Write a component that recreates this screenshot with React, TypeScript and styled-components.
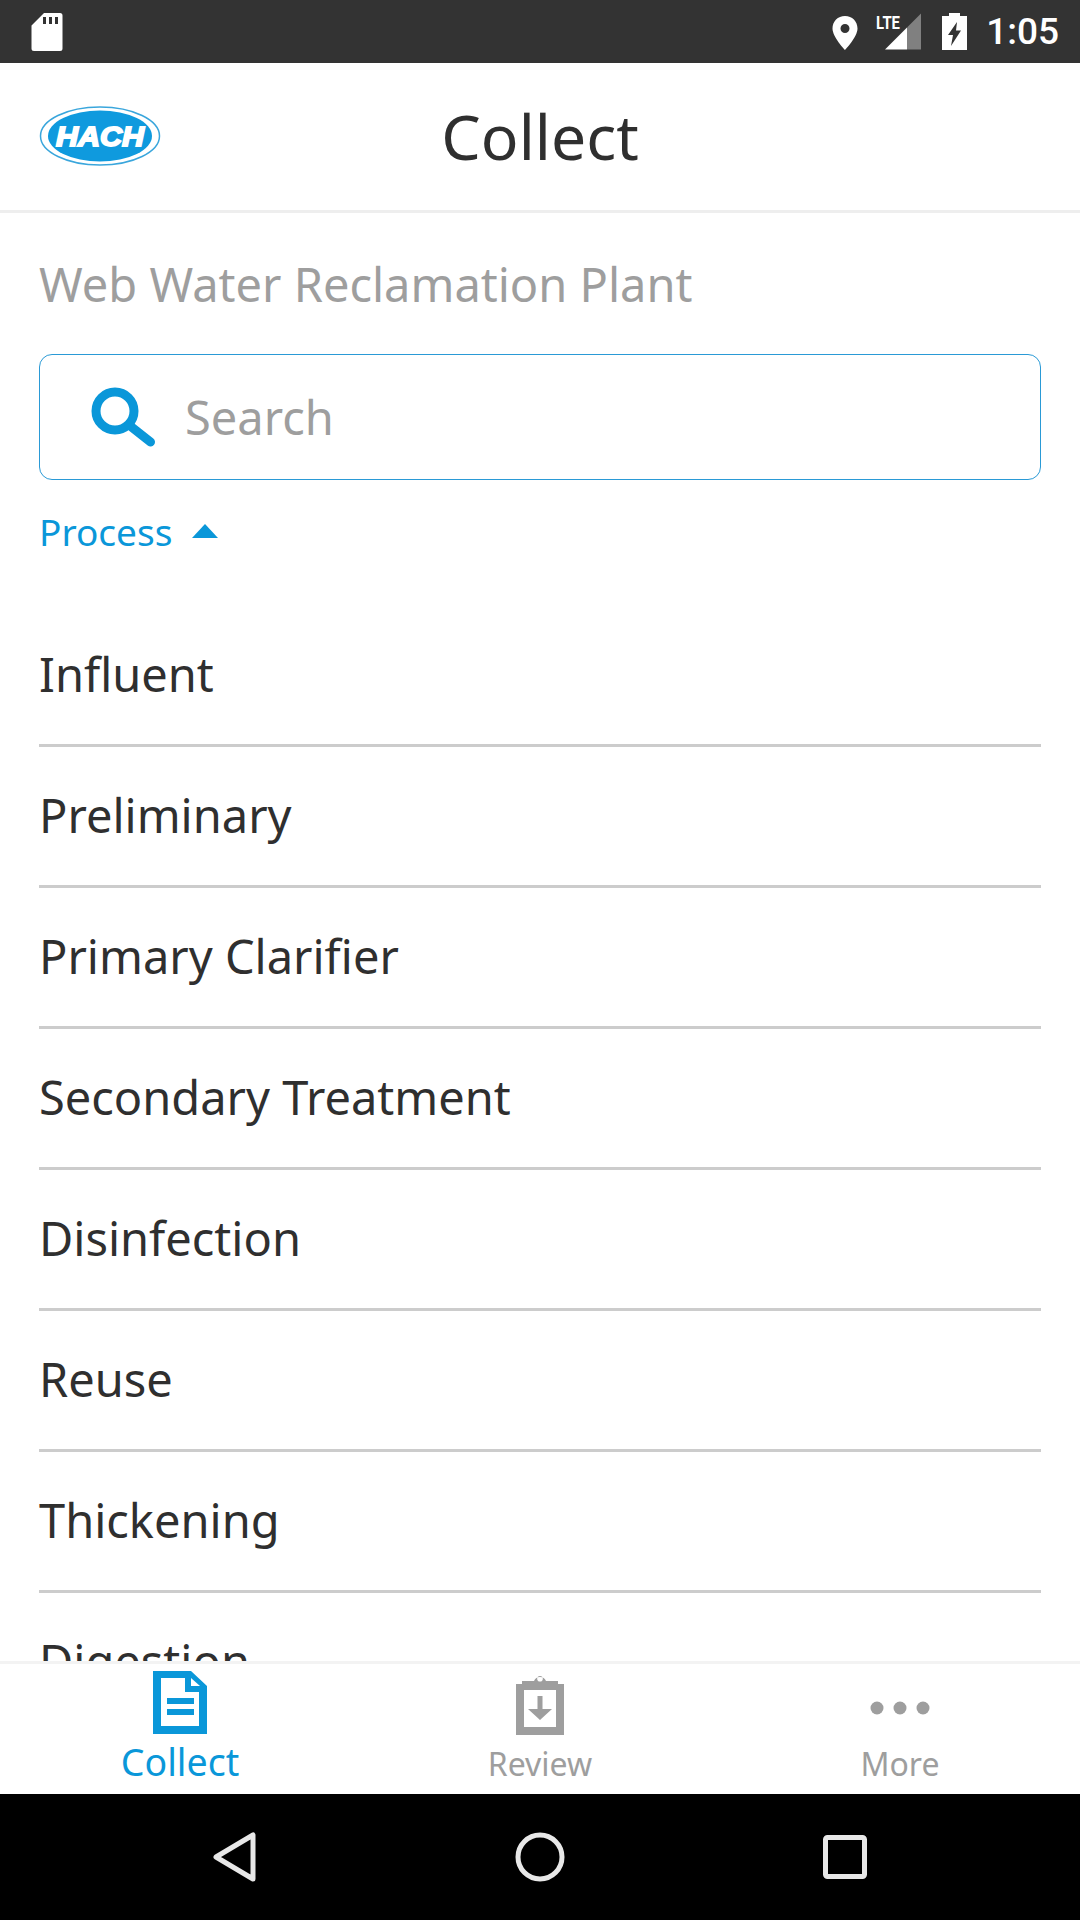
import React from "react";
import styled, { createGlobalStyle } from "styled-components";

const BLUE = "#0a97d9";
const GRAY = "#9e9e9e";
const INK = "#2f2f2f";

const GlobalStyle = createGlobalStyle`
  html, body {
    margin: 0;
    padding: 0;
    background: #fff;
  }
  * {
    box-sizing: border-box;
  }
`;

const Screen = styled.div`
  display: flex;
  flex-direction: column;
  width: 1080px;
  height: 1920px;
  overflow: hidden;
  font-family: "Noto Sans", "Open Sans", sans-serif;
  background: #fff;
`;

const StatusBar = styled.div`
  display: flex;
  align-items: center;
  justify-content: space-between;
  flex: 0 0 63px;
  padding: 0 21px 0 31px;
  background: #333333;
`;

const StatusIcons = styled.div`
  display: flex;
  align-items: center;
`;

const Clock = styled.span`
  margin-left: 19px;
  font-family: "Roboto", sans-serif;
  font-size: 37px;
  font-weight: 500;
  line-height: 63px;
  color: #fff;
`;

const Header = styled.header`
  position: relative;
  display: flex;
  align-items: center;
  justify-content: center;
  flex: 0 0 150px;
  border-bottom: 3px solid #eeeeee;
`;

const LogoSlot = styled.div`
  position: absolute;
  left: 39px;
  top: 43px;
  display: flex;
`;

const Title = styled.h1`
  margin: 0 0 2px;
  font-size: 62.5px;
  font-weight: 400;
  color: ${INK};
`;

const Content = styled.main`
  flex: 1 1 0;
  min-height: 0;
  overflow: hidden;
  padding: 0 39px;
`;

const PlantName = styled.div`
  margin-top: 37px;
  font-size: 47px;
  line-height: 68px;
  color: ${GRAY};
`;

const SearchBox = styled.div`
  display: flex;
  align-items: center;
  gap: 28px;
  height: 126px;
  margin-top: 36px;
  padding-left: 51px;
  border: 1.5px solid #2a9ad6;
  border-radius: 13px;
`;

const SearchHint = styled.span`
  font-size: 47px;
  color: ${GRAY};
`;

const Filter = styled.div`
  display: flex;
  align-items: center;
  gap: 20px;
  height: 48px;
  margin-top: 27px;
  font-size: 37px;
  color: ${BLUE};
`;

const Caret = styled.span`
  width: 0;
  height: 0;
  border-left: 13px solid transparent;
  border-right: 13px solid transparent;
  border-bottom: 14px solid ${BLUE};
`;

const List = styled.ul`
  margin: 51px 0 0;
  padding: 0;
  list-style: none;
`;

const Row = styled.li`
  display: flex;
  align-items: center;
  height: 141px;
  padding-bottom: 3px;
  border-bottom: 3px solid #cccccc;
  font-size: 47px;
  color: ${INK};
`;

const TabBar = styled.nav`
  display: grid;
  grid-template-columns: repeat(3, 1fr);
  flex: 0 0 133px;
  background: #fff;
  border-top: 3px solid #f3f3f3;
`;

const Tab = styled.div`
  display: flex;
  flex-direction: column;
  align-items: center;
`;

const TabIcon = styled.div`
  display: flex;
  align-items: flex-start;
  justify-content: center;
  height: 78px;
  padding-top: 7px;
`;

const TabLabel = styled.span<{ $active?: boolean }>`
  margin-top: ${(props) => (props.$active ? "-2px" : "0")};
  font-size: ${(props) => (props.$active ? "37.5px" : "32px")};
  line-height: 44px;
  color: ${(props) => (props.$active ? BLUE : GRAY)};
`;

const NavBar = styled.div`
  display: grid;
  grid-template-columns: repeat(3, 1fr);
  flex: 0 0 126px;
  padding: 0 83px;
  background: #000;
`;

const NavButton = styled.div`
  display: flex;
  align-items: center;
  justify-content: center;
`;

function HachLogo() {
  return (
    <svg width="122" height="60" viewBox="0 0 122 60">
      <ellipse cx="61" cy="30" rx="59.500" ry="29" fill="#fff" stroke="#3aa6dc" strokeWidth="1.500" />
      <ellipse cx="61" cy="30" rx="52" ry="25.500" fill="#0f9ade" />
      <text
        x="61"
        y="40"
        textAnchor="middle"
        fontFamily="Liberation Sans, sans-serif"
        fontSize="27"
        fontWeight="700"
        fontStyle="italic"
        stroke="#fff"
        strokeWidth="1.800"
        fill="#fff"
        textLength="88"
        lengthAdjust="spacingAndGlyphs"
      >
        HACH
      </text>
    </svg>
  );
}

function SdCardIcon() {
  return (
    <svg width="32" height="39" viewBox="0 0 32 39">
      <path
        fill="#fff"
        fillRule="evenodd"
        d="M13 1h16a2.500 2.500 0 0 1 2.500 2.500v33a2.500 2.500 0 0 1-2.500 2.500H3a2.500 2.500 0 0 1-2.500-2.500V13.500zM12 5v7h3V5zM18 5v7h3V5zM24 5v7h3V5z"
      />
    </svg>
  );
}

function LocationIcon() {
  return (
    <svg width="26" height="34" viewBox="0 0 26 34" style={{ marginRight: 18, marginTop: 3 }}>
      <path
        fill="#fff"
        fillRule="evenodd"
        d="M13 0C5.800 0 .5 5.400 .5 12.500 .5 21 13 34 13 34s12.500-13 12.500-21.500C25.500 5.400 20.200 0 13 0zm0 8a4.500 4.500 0 1 1 0 9 4.500 4.500 0 0 1 0-9z"
      />
    </svg>
  );
}

function SignalIcon() {
  return (
    <svg width="45" height="44" viewBox="0 0 45 44" style={{ marginRight: 21 }}>
      <path fill="#fff" d="M9 39.500 31 17.500v22z" />
      <path fill="#808080" d="M31 17.500 45 3.500v36H31z" />
      <text
        x="0"
        y="18.500"
        fontFamily="Roboto, sans-serif"
        fontSize="19"
        fontWeight="700"
        fill="#fff"
        textLength="24"
        lengthAdjust="spacingAndGlyphs"
      >
        LTE
      </text>
    </svg>
  );
}

function BatteryIcon() {
  return (
    <svg width="25" height="37" viewBox="0 0 25 37">
      <path
        fill="#fff"
        fillRule="evenodd"
        d="M7 0h11v3h7v34H0V3h7zM15 9 6 22h5l-2 11 10-15.500h-5z"
      />
    </svg>
  );
}

function SearchIcon() {
  return (
    <svg width="66" height="60" viewBox="0 0 66 60">
      <circle cx="24" cy="24" r="19" fill="none" stroke={BLUE} strokeWidth="9" />
      <path d="M38 38 59.500 55" stroke={BLUE} strokeWidth="9" strokeLinecap="round" />
    </svg>
  );
}

function DocumentIcon() {
  return (
    <svg width="54" height="63" viewBox="0 0 54 63">
      <path
        fill={BLUE}
        fillRule="evenodd"
        d="M0 0h38l16 15v48H0zM8 7v48h38V21H32V7zM38 7v8h9z"
      />
      <path fill={BLUE} d="M14 27h27v6H14zM14 38h27v6H14z" />
    </svg>
  );
}

function ClipboardIcon() {
  return (
    <svg width="48" height="64" viewBox="0 0 48 64" style={{ marginTop: 0 }}>
      <path
        fill={GRAY}
        fillRule="evenodd"
        d="M0 13h6v-3h12a6.500 6.500 0 0 1 12 0h12v3h6v51H0zM24 5a2.800 2.800 0 1 0 0 5.600A2.800 2.800 0 0 0 24 5zM8 19v37h32V19z"
      />
      <path fill={GRAY} d="M21.500 25h5v13H36L24 49 12 38h9.500z" />
    </svg>
  );
}

function DotsIcon() {
  return (
    <svg width="60" height="14" viewBox="0 0 60 14" style={{ marginTop: 30 }}>
      <circle cx="7" cy="7" r="6.500" fill={GRAY} />
      <circle cx="30" cy="7" r="6.500" fill={GRAY} />
      <circle cx="53" cy="7" r="6.500" fill={GRAY} />
    </svg>
  );
}

const PROCESSES = [
  "Influent",
  "Preliminary",
  "Primary Clarifier",
  "Secondary Treatment",
  "Disinfection",
  "Reuse",
  "Thickening",
  "Digestion",
];

export default function App() {
  return (
    <Screen>
      <GlobalStyle />
      <StatusBar>
        <SdCardIcon />
        <StatusIcons>
          <LocationIcon />
          <SignalIcon />
          <BatteryIcon />
          <Clock>1:05</Clock>
        </StatusIcons>
      </StatusBar>
      <Header>
        <LogoSlot>
          <HachLogo />
        </LogoSlot>
        <Title>Collect</Title>
      </Header>
      <Content>
        <PlantName>Web Water Reclamation Plant</PlantName>
        <SearchBox>
          <SearchIcon />
          <SearchHint>Search</SearchHint>
        </SearchBox>
        <Filter>
          Process
          <Caret />
        </Filter>
        <List>
          {PROCESSES.map((name) => (
            <Row key={name}>{name}</Row>
          ))}
        </List>
      </Content>
      <TabBar>
        <Tab>
          <TabIcon>
            <DocumentIcon />
          </TabIcon>
          <TabLabel $active>Collect</TabLabel>
        </Tab>
        <Tab>
          <TabIcon>
            <ClipboardIcon />
          </TabIcon>
          <TabLabel>Review</TabLabel>
        </Tab>
        <Tab>
          <TabIcon>
            <DotsIcon />
          </TabIcon>
          <TabLabel>More</TabLabel>
        </Tab>
      </TabBar>
      <NavBar>
        <NavButton>
          <svg width="44" height="50" viewBox="0 0 44 50">
            <path d="M40 3v44L3 25z" fill="none" stroke="#e8e8e8" strokeWidth="5" strokeLinejoin="round" />
          </svg>
        </NavButton>
        <NavButton>
          <svg width="50" height="50" viewBox="0 0 50 50">
            <circle cx="25" cy="25" r="22" fill="none" stroke="#e8e8e8" strokeWidth="5" />
          </svg>
        </NavButton>
        <NavButton>
          <svg width="44" height="44" viewBox="0 0 44 44">
            <rect x="2.500" y="2.500" width="39" height="39" rx="2" fill="none" stroke="#e8e8e8" strokeWidth="5" />
          </svg>
        </NavButton>
      </NavBar>
    </Screen>
  );
}
